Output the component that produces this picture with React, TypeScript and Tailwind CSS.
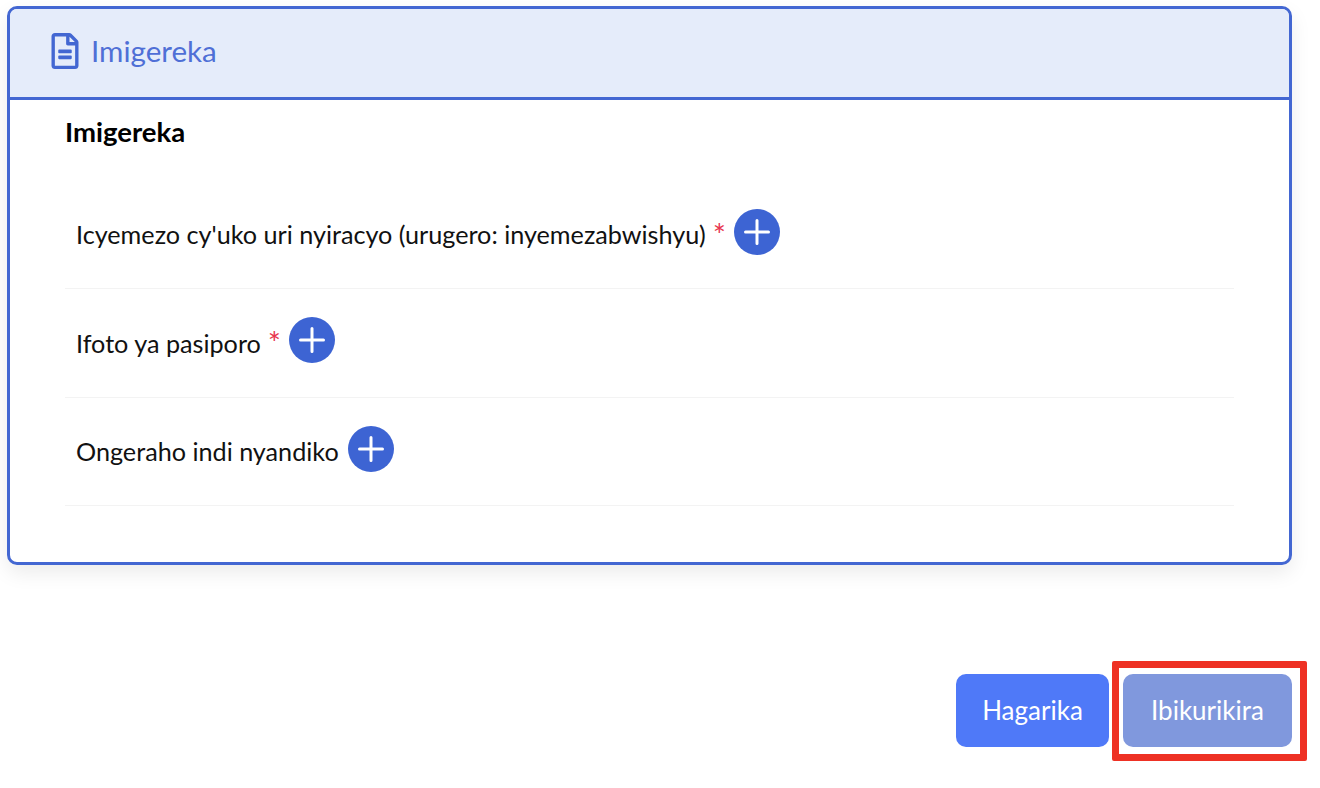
import { FaRegFileAlt } from "react-icons/fa";

const font = { fontFamily: '"Lato", "Noto Sans", sans-serif' };

function AddRow({ label, required }: { label: string; required?: boolean }) {
  return (
    <div className="flex h-[108.5px] items-center border-b border-[#f3f3f3] pb-[5px] pl-[11px]">
      <span className="mt-[5px] text-[25.2px] leading-[32px] text-[#111]">{label}</span>
      {required && (
        <span className="ml-[7px] mt-[4px] text-[31px] leading-[32px] text-[#e8364f]">*</span>
      )}
      <button
        type="button"
        className={`flex h-[46px] w-[46px] items-center justify-center rounded-full bg-[#3d64d3] ${required ? "ml-[8px]" : "ml-[9px]"}`}
      >
        <svg width="26" height="26" viewBox="0 0 26 26" fill="none">
          <path d="M13 1.5v23M1.5 13h23" stroke="#fff" strokeWidth="3" strokeLinecap="round" />
        </svg>
      </button>
    </div>
  );
}

export default function App() {
  return (
    <div className="relative h-[788px] w-[1320px] overflow-hidden bg-white pl-[7px] pt-[6px]" style={font}>
      <div className="h-[559px] w-[1285px] overflow-hidden rounded-[10px] border-[3px] border-[#4367d2] bg-white shadow-[0_8px_20px_rgba(0,0,0,0.08)]">
        <div className="flex h-[91px] items-center gap-[8px] border-b-[3px] border-[#4367d2] bg-[#e5ecfa] pb-[4px] pl-[37px]">
          <FaRegFileAlt className="text-[36px] text-[#4367d2]" />
          <span className="text-[29.6px] leading-[36px] text-[#4f6fd6]">Imigereka</span>
        </div>
        <div className="px-[55px]">
          <h2 className="pt-[15px] text-[27.5px] font-bold leading-[34px] text-black">Imigereka</h2>
          <div className="mt-[31.5px]">
            <AddRow label="Icyemezo cy'uko uri nyiracyo (urugero: inyemezabwishyu)" required />
            <AddRow label="Ifoto ya pasiporo" required />
            <AddRow label="Ongeraho indi nyandiko" />
          </div>
        </div>
      </div>

      <div className="mt-[109px] flex w-[1285px] justify-end gap-[14px]">
        <button type="button" className="h-[73px] w-[153px] rounded-[10px] bg-[#4f79f8] text-[26px] text-white">
          Hagarika
        </button>
        <button type="button" className="h-[73px] w-[169px] rounded-[10px] bg-[#8098dd] text-[26px] text-white">
          Ibikurikira
        </button>
      </div>

      {/* annotation over the next button */}
      <div className="absolute left-[1112px] top-[661px] h-[100px] w-[195px] rounded-[2px] border-[7px] border-[#ee3124]" />
    </div>
  );
}
